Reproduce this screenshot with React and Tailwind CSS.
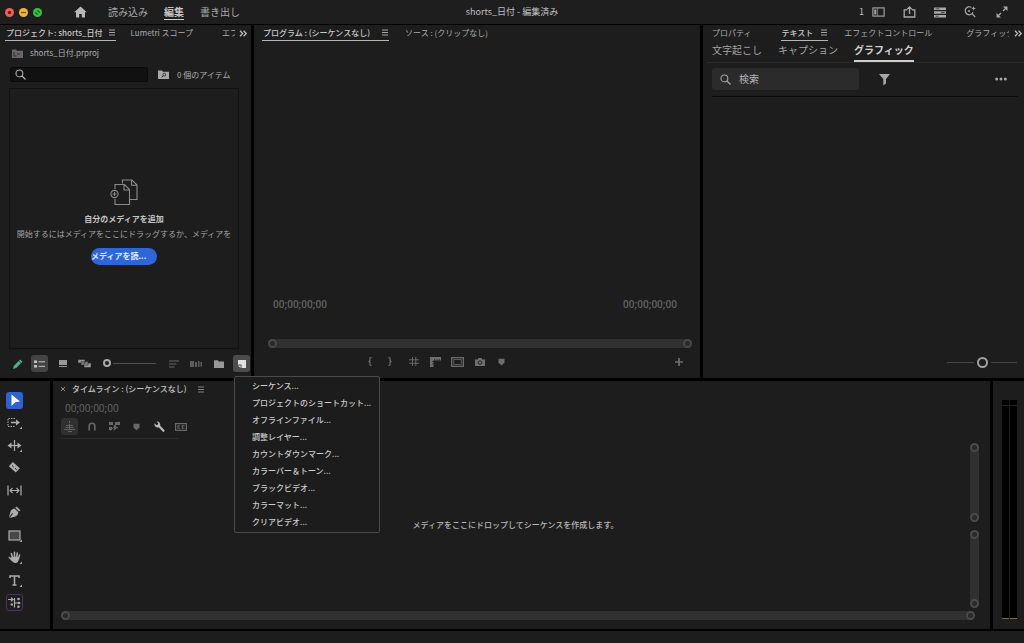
import React from "react";

const cx = "shrink-0 overflow-visible";

function Icon({ w, h, children, className = "" }) {
  return (
    <svg width={w} height={h} viewBox={`0 0 ${w} ${h}`} fill="none" stroke="currentColor" aria-hidden="true" className={`${cx} ${className}`}>
      {children}
    </svg>
  );
}

const Hamburger = () => (
  <Icon w={6} h={7}><path d="M0 1h6M0 3.5h6M0 6h6" strokeWidth="0.8" /></Icon>
);
const Chevrons = () => (
  <Icon w={8} h={7}><path d="M1 .8l2.6 2.7L1 6.2M4.6.8l2.6 2.7-2.6 2.7" strokeWidth="1.3" /></Icon>
);
const SearchIcon = ({ className }) => (
  <Icon w={11} h={11} className={className}><circle cx="4.4" cy="4.4" r="3.4" strokeWidth="1.1" /><path d="M7 7l3.5 3.5" strokeWidth="1.3" /></Icon>
);
const Marker = () => (
  <Icon w={7} h={8}><path d="M.5.8h6v3.8L3.5 7.5.5 4.6z" fill="currentColor" stroke="none" /></Icon>
);

function Tab({ active, children, className = "gap-2" }) {
  return (
    <button
      type="button"
      role="tab"
      aria-selected={!!active}
      className={`flex h-4 shrink-0 items-center whitespace-nowrap border-b px-px ${active ? "border-[#b5b5b5] font-medium text-[#c8c8c8]" : "border-transparent text-[#ababab]"} ${className}`}
    >
      {children}
      {active && <Hamburger />}
    </button>
  );
}

function Tool({ label, children, className = "" }) {
  return (
    <button type="button" aria-label={label} className={`flex size-[17px] shrink-0 items-center justify-center rounded-[3px] ${className}`}>
      {children}
    </button>
  );
}

function ZoomBar({ vertical, className = "" }) {
  return (
    <div className={`flex justify-between rounded-full bg-[#303030] ${vertical ? "w-[9px] flex-col" : "h-[9px]"} ${className}`}>
      <span className="size-[9px] rounded-full border-2 border-[#494949] bg-[#2a2a2a]" />
      <span className="size-[9px] rounded-full border-2 border-[#494949] bg-[#2a2a2a]" />
    </div>
  );
}

function Header() {
  return (
    <header className="grid grid-cols-[1fr_auto_1fr] items-center bg-[#1e1e1e] text-[10px] text-[#a9a9a9]">
      <div className="flex h-full items-center pl-[5px]">
        <div className="flex gap-[5px]">
          <button type="button" aria-label="閉じる" className="flex size-[9px] items-center justify-center rounded-full bg-[#ee5f57]">
            <Icon w={9} h={9} className="text-[#7c1512]"><circle cx="4.5" cy="4.5" r="1.7" fill="currentColor" stroke="none" /></Icon>
          </button>
          <button type="button" aria-label="最小化" className="flex size-[9px] items-center justify-center rounded-full bg-[#f0b43c]">
            <Icon w={9} h={9} className="text-[#8a5310]"><path d="M2 4.5h5" strokeWidth="1.3" /></Icon>
          </button>
          <button type="button" aria-label="拡大" className="flex size-[9px] items-center justify-center rounded-full bg-[#38c142]">
            <Icon w={9} h={9} className="text-[#0d6a17]"><path d="M2.4 5.6V3.8l2.8 2.8H3.4zM6.6 3.4v1.8L3.8 2.4h1.8z" fill="currentColor" strokeWidth="0.3" /></Icon>
          </button>
        </div>
        <button type="button" aria-label="ホーム" className="ml-8 text-[#b8b8b8]">
          <Icon w={13} h={12}><path d="M6.5.4L12.8 6.3H11v5.3H7.8V8H5.2v3.6H2V6.3H.2z" fill="currentColor" stroke="none" /></Icon>
        </button>
        <nav className="ml-[21px] flex items-center gap-4">
          <a href="#import">読み込み</a>
          <a href="#edit" className="border-b border-[#cfcfcf] font-bold leading-[15px] text-[#c4c4c4]">編集</a>
          <a href="#export">書き出し</a>
        </nav>
      </div>
      <h1 className="text-[9px] text-[#c0c0c0]">shorts_日付 - 編集済み</h1>
      <div className="flex items-center justify-end pr-4">
        <span className="mr-2 text-[9px] text-[#c0c0c0]">1</span>
        <button type="button" aria-label="ワークスペース" className="mr-[18px]">
          <Icon w={13} h={10}><rect x=".9" y=".9" width="11.2" height="8.2" strokeWidth="1.1" /><path d="M2.3 2.5h2v5h-2z" fill="currentColor" stroke="none" /><path d="M5.5 1v8" strokeWidth="0.6" /></Icon>
        </button>
        <button type="button" aria-label="クイック書き出し" className="mr-[18px]">
          <Icon w={13} h={12}><path d="M4 3.8H1.2v7.2h10.6V3.8H9M6.5 8V1.2M4 3.4l2.5-2.5L9 3.4" strokeWidth="1.3" /></Icon>
        </button>
        <button type="button" aria-label="進行状況" className="mr-[18px]">
          <Icon w={12} h={11}><path d="M0 1.8h12M0 5.5h12M0 9.2h12" strokeWidth="2.4" /><path d="M1.5 1.8h4M7 5.5h3.5M1.5 9.2h3" stroke="#1e1e1e" strokeWidth=".7" /></Icon>
        </button>
        <button type="button" aria-label="ヘルプ" className="mr-[19px]">
          <Icon w={13} h={12}><path d="M7.4 1.4A4 4 0 1 0 9 6.2M7.8 7.4l3.4 3.6" strokeWidth="1.2" /><circle cx="5" cy="5" r="1" fill="currentColor" stroke="none" /><path d="M9.6 0l.6 1.8 1.7.6-1.7.6-.6 1.8-.6-1.8-1.7-.6L9 1.8z" fill="currentColor" stroke="none" /></Icon>
        </button>
        <button type="button" aria-label="全画面">
          <Icon w={12} h={12}><path d="M7 0.5h4.5V5zM.5 7v4.5H5z" fill="currentColor" stroke="none" /><path d="M10.5 1.5L7 5M1.5 10.5L5 7" strokeWidth="1.3" /></Icon>
        </button>
      </div>
    </header>
  );
}

const newItems = [
  "シーケンス...",
  "プロジェクトのショートカット...",
  "オフラインファイル...",
  "調整レイヤー...",
  "カウントダウンマーク...",
  "カラーバー＆トーン...",
  "ブラックビデオ...",
  "カラーマット...",
  "クリアビデオ...",
];

function NewItemMenu() {
  return (
    <div role="menu" aria-label="新規項目" className="absolute left-px top-[21px] z-10 flex w-[146px] flex-col rounded-[2px] border border-[#4a4a4a] bg-[#1c1c1c] pb-[2px]">
      {newItems.map((item) => (
        <button key={item} type="button" role="menuitem" className="h-[17px] whitespace-nowrap pl-[17px] text-left font-medium text-[#cdcdcd]">
          {item}
        </button>
      ))}
    </div>
  );
}

function ProjectPanel() {
  return (
    <section className="flex min-w-0 flex-col bg-[#1d1d1d]">
      <div role="tablist" className="flex items-start pl-[5px]">
        <Tab active className="gap-[6px]">プロジェクト: shorts_日付</Tab>
        <Tab className="ml-[14px]">Lumetri スコープ</Tab>
        <Tab className="ml-[27px] w-[14px] overflow-hidden">エフェクト</Tab>
        <button type="button" aria-label="その他のパネル" className="ml-1 flex h-4 items-center text-[#bdbdbd]"><Chevrons /></button>
      </div>
      <div className="mt-1 flex h-4 items-center gap-[7px] pl-3 text-[#b0b0b0]">
        <Icon w={11} h={9} className="text-[#666]"><path d="M0 .5h4l1 1.2h6V9H0z" fill="currentColor" stroke="none" /><path d="M2 3v4h2.5M5 5h3" stroke="#2a2a2a" strokeWidth=".9" /></Icon>
        <span>shorts_日付.prproj</span>
      </div>
      <div className="mt-[6px] flex items-center pl-[10px]">
        <label className="flex h-[15px] w-[138px] items-center rounded-[2px] border border-[#0a0a0a] bg-[#111] pl-1 text-[#b0b0b0]">
          <SearchIcon />
          <input type="search" aria-label="プロジェクトを検索" className="ml-1 w-full min-w-0 bg-transparent outline-none" />
        </label>
        <button type="button" aria-label="検索ビン" className="ml-[10px] text-[#a8a8a8]">
          <Icon w={11} h={9}><path d="M0 .5h4l1 1.2h6V9H0z" fill="currentColor" stroke="none" /><circle cx="6.3" cy="4.7" r="1.4" stroke="#222" strokeWidth=".8" /><path d="M5.2 5.8L3.6 7.4" stroke="#222" strokeWidth=".9" /></Icon>
        </button>
        <span className="ml-2 whitespace-nowrap text-[#b0b0b0]">0 個のアイテム</span>
      </div>
      <div className="ml-[9px] mr-3 mt-[6px] flex grow flex-col items-center justify-center overflow-hidden border border-[#121212] pt-[6px]">
        <Icon w={28} h={26} className="text-[#8a8a8a]">
          <path d="M12.5 4.5V1h9.5l5 5v14.5h-7M21.5 1v5.3H27" strokeWidth="1.1" />
          <path d="M5 10V5.5h9.5l5 5v15H5V20M14 5.5v5.5h5.5" strokeWidth="1.1" />
          <circle cx="4.5" cy="15" r="3.6" strokeWidth="1.1" /><path d="M4.5 13v4M2.5 15h4" strokeWidth="1" />
        </Icon>
        <h2 className="mt-[6px] h-[15px] font-bold leading-[15px] text-[#c4c4c4]">自分のメディアを追加</h2>
        <p className="h-[15px] whitespace-nowrap leading-[15px] text-[#a2a2a2]">開始するにはメディアをここにドラッグするか、メディアを</p>
        <button type="button" className="mt-[7px] h-[17px] w-[66px] whitespace-nowrap rounded-full bg-[#2d66d8] text-left font-bold text-[#e4ebfa]">メディアを読...</button>
      </div>
      <div className="flex h-[29px] items-center pl-[9px] text-[#989898]">
        <Tool label="書き込み可能">
          <Icon w={10} h={10} className="text-[#4db184]"><path d="M0 10l.9-3.2L7.3.6l2.2 2.1L3.2 9z" fill="currentColor" stroke="none" /><path d="M6 1.9l2.2 2.2" stroke="#1d1d1d" strokeWidth=".6" /></Icon>
        </Tool>
        <Tool label="リスト表示" className="ml-[5px] bg-[#434343] text-[#c5c5c5]">
          <Icon w={11} h={8}><path d="M0 .5h3v2.5H0zM0 5h3v2.5H0z" fill="currentColor" stroke="none" /><path d="M4.5 1.8H11M4.5 6.3H11" strokeWidth="1" /></Icon>
        </Tool>
        <Tool label="アイコン表示" className="ml-[6px]">
          <Icon w={8} h={9}><path d="M0 1h8v5H0zM0 7h8v1H0z" fill="currentColor" stroke="none" /></Icon>
        </Tool>
        <Tool label="フリーフォーム表示" className="ml-[5px]">
          <Icon w={13} h={9}><path d="M0 .5h7v3.5H0zM3 2.5h7V6H3zM6 4h7v4.5H6z" fill="currentColor" stroke="#1d1d1d" strokeWidth=".5" /></Icon>
        </Tool>
        <input
          type="range" min="0" max="100" defaultValue="0" aria-label="アイコンのサイズ"
          className="ml-[10px] h-[9px] w-[53px] appearance-none bg-transparent [&::-webkit-slider-runnable-track]:h-[9px] [&::-webkit-slider-runnable-track]:bg-[linear-gradient(#505050,#505050)] [&::-webkit-slider-runnable-track]:bg-[length:100%_1px] [&::-webkit-slider-runnable-track]:bg-center [&::-webkit-slider-runnable-track]:bg-no-repeat [&::-webkit-slider-thumb]:size-[8px] [&::-webkit-slider-thumb]:appearance-none [&::-webkit-slider-thumb]:rounded-full [&::-webkit-slider-thumb]:border-2 [&::-webkit-slider-thumb]:border-[#a8a8a8] [&::-webkit-slider-thumb]:bg-[#1d1d1d] [&::-webkit-slider-thumb]:shadow-[0_0_0_2px_#1d1d1d]"
        />
        <Tool label="並べ替え" className="ml-[9px] text-[#666]">
          <Icon w={10} h={8}><path d="M0 1h10M0 4h7.5M0 7h5.5" strokeWidth="1" /></Icon>
        </Tool>
        <Tool label="シーケンスの自動化" className="ml-[5px] text-[#5d5d5d]">
          <Icon w={12} h={6}><path d="M0 0h4v6H0zM5 1h2v5H5zM8 0h1.5v6H8zM10.5 1H12v4.5h-1.5z" fill="currentColor" stroke="none" /></Icon>
        </Tool>
        <Tool label="新規ビン" className="ml-[6px]">
          <Icon w={10} h={8}><path d="M0 .3h3.8l1 1.2H10V8H0z" fill="currentColor" stroke="none" /></Icon>
        </Tool>
        <div className="relative ml-[6px]">
          <Tool label="新規項目" className="bg-[#4c4c4c] text-[#e0e0e0]">
            <Icon w={8} h={8}><path d="M0 0h8v8H3.5V4.5H0zM0 5.4L2.6 8V5.4z" fill="currentColor" stroke="none" /></Icon>
          </Tool>
          <NewItemMenu />
        </div>
      </div>
    </section>
  );
}

function ProgramPanel() {
  return (
    <section className="flex min-w-0 flex-col bg-[#1d1d1d]">
      <div role="tablist" className="flex items-start pl-2">
        <Tab active className="gap-3">プログラム : (シーケンスなし)</Tab>
        <Tab className="ml-[15px]">ソース : (クリップなし)</Tab>
      </div>
      <div className="grow" />
      <div className="flex justify-between pl-[19px] pr-[23px] font-['Open_Sans',sans-serif] text-[10px] font-semibold leading-4 text-[#636363]">
        <span>00;00;00;00</span>
        <span>00;00;00;00</span>
      </div>
      <ZoomBar className="ml-[14px] mr-2 mt-[27px]" />
      <div className="mb-2 mt-[5px] flex items-center justify-between pl-[107px] pr-[13px] text-[#6e6e6e]">
        <div className="flex gap-[5px]">
          <div className="mr-[2px] flex gap-[3px]">
            <Tool label="インをマーク"><Icon w={4} h={9}><path d="M3.5.5H3Q2 .5 2 1.5V3.5L1 4.5 2 5.5v2q0 1 1 1h.5" strokeWidth="1.2" /></Icon></Tool>
            <Tool label="アウトをマーク"><Icon w={4} h={9}><path d="M.5.5H1q1 0 1 1v2l1 1-1 1v2q0 1-1 1H.5" strokeWidth="1.2" /></Icon></Tool>
          </div>
          <Tool label="グリッド"><Icon w={10} h={9}><path d="M3.5 0v9M6.8 0v9M0 2.8h10M0 6.3h10" strokeWidth=".9" /></Icon></Tool>
          <Tool label="定規"><Icon w={11} h={10}><path d="M0 0h11v3.5H3.5V10H0z" fill="currentColor" stroke="none" /><path d="M4.5 4V2M7 4V2M9.3 4V2M4 4.5H2M4 6.8H2" stroke="#1d1d1d" strokeWidth=".7" /></Icon></Tool>
          <Tool label="セーフマージン"><Icon w={13} h={10}><rect x=".7" y=".7" width="11.6" height="8.6" strokeWidth="1.3" /><rect x="2.8" y="2.5" width="7.4" height="5" strokeWidth=".7" /></Icon></Tool>
          <Tool label="フレームを書き出し"><Icon w={10} h={8}><path d="M0 1.5h2.5L3.5 0h3l1 1.5H10V8H0z" fill="currentColor" stroke="none" /><circle cx="5" cy="4.6" r="1.7" stroke="#1d1d1d" strokeWidth=".9" /></Icon></Tool>
          <Tool label="マーカーを追加"><Marker /></Tool>
        </div>
        <Tool label="ボタンエディター"><Icon w={8} h={8}><path d="M4 0v8M0 4h8" strokeWidth="1.7" /></Icon></Tool>
      </div>
    </section>
  );
}

function TextPanel() {
  return (
    <section className="flex min-w-0 flex-col bg-[#1d1d1d]">
      <div role="tablist" className="flex items-start pl-2">
        <Tab>プロパティ</Tab>
        <Tab active className="ml-7 gap-2">テキスト</Tab>
        <Tab className="ml-[15px]">エフェクトコントロール</Tab>
        <Tab className="ml-[32px] w-[44px] overflow-hidden">グラフィックス</Tab>
        <button type="button" aria-label="その他のパネル" className="ml-[5px] flex h-4 items-center text-[#bdbdbd]"><Chevrons /></button>
      </div>
      <div role="tablist" className="ml-1 flex gap-4 border-b border-[#2b2b2b] pl-[5px] text-[10px] text-[#a2a2a2]">
        <button type="button" role="tab" aria-selected="false" className="h-[21px] pb-[3px]">文字起こし</button>
        <button type="button" role="tab" aria-selected="false" className="h-[21px] pb-[3px]">キャプション</button>
        <button type="button" role="tab" aria-selected="true" className="h-[21px] border-b-2 border-[#cfcfcf] pb-px font-bold text-[#cfcfcf]">グラフィック</button>
      </div>
      <div className="ml-[9px] mr-[6px] flex items-center border-b border-[#0b0b0b] pb-[6px] pt-[5px] text-[#a6a6a6]">
        <label className="flex h-[22px] w-[147px] items-center rounded-[3px] bg-[#2b2b2b] pl-2">
          <SearchIcon />
          <input type="search" aria-label="検索" placeholder="検索" className="ml-2 w-full min-w-0 bg-transparent text-[10px] outline-none placeholder:text-[#b4b4b4]" />
        </label>
        <button type="button" aria-label="フィルター" className="ml-5">
          <Icon w={11} h={11}><path d="M0 0h11L7 5v4.5L4.3 11.5V5z" fill="currentColor" stroke="none" /></Icon>
        </button>
        <button type="button" aria-label="その他" className="ml-auto mr-[11px]">
          <Icon w={12} h={4}><g fill="currentColor" stroke="none"><circle cx="1.7" cy="2" r="1.5" /><circle cx="6" cy="2" r="1.5" /><circle cx="10.3" cy="2" r="1.5" /></g></Icon>
        </button>
      </div>
      <div className="mt-auto flex justify-end pb-[9px] pr-[7px]">
        <input
          type="range" min="0" max="100" defaultValue="50" aria-label="サムネールのサイズ"
          className="h-[13px] w-[70px] appearance-none bg-transparent [&::-webkit-slider-runnable-track]:h-[13px] [&::-webkit-slider-runnable-track]:bg-[linear-gradient(#464646,#464646)] [&::-webkit-slider-runnable-track]:bg-[length:100%_1px] [&::-webkit-slider-runnable-track]:bg-center [&::-webkit-slider-runnable-track]:bg-no-repeat [&::-webkit-slider-thumb]:mt-px [&::-webkit-slider-thumb]:size-[11px] [&::-webkit-slider-thumb]:appearance-none [&::-webkit-slider-thumb]:rounded-full [&::-webkit-slider-thumb]:border-2 [&::-webkit-slider-thumb]:border-[#a0a0a0] [&::-webkit-slider-thumb]:bg-[#1d1d1d] [&::-webkit-slider-thumb]:shadow-[0_0_0_3px_#1d1d1d]"
        />
      </div>
    </section>
  );
}

const Corner = () => <path d="M16 12.5v2.5h-2.5z" fill="currentColor" stroke="none" />;

function ToolsPanel() {
  return (
    <aside aria-label="ツール" className="bg-[#1d1d1d] pl-[5px] pt-[11px] text-[#acacac]">
      <div className="flex h-[219px] w-[18px] flex-col items-center justify-between">
        <Tool label="選択ツール" className="bg-[#2c62d2] text-white">
          <Icon w={17} h={17}><path d="M5.5 2.5l8.5 7-4.5.6-4 4z" fill="currentColor" stroke="none" /></Icon>
        </Tool>
        <Tool label="トラックの前方選択ツール">
          <Icon w={17} h={17}><path d="M9 4.5H2v8h7" strokeWidth="1" strokeDasharray="1.5 1" /><path d="M5 8.5h6" strokeWidth="1.6" /><path d="M10 5.5l4 3-4 3z" fill="currentColor" stroke="none" /><Corner /></Icon>
        </Tool>
        <Tool label="リップルツール">
          <Icon w={17} h={17}><path d="M8.5 3v11" strokeWidth="1.2" /><path d="M5.5 5.5v6l-4-3zM11.5 5.5v6l4-3z" fill="currentColor" stroke="none" /><path d="M4 8.5h9" strokeWidth="1.3" /><Corner /></Icon>
        </Tool>
        <Tool label="レーザーツール">
          <Icon w={17} h={17}><path d="M6.8 3l7 6.3-4 4.2-7-6.3z" fill="currentColor" stroke="none" /><path d="M6 6.5l1.6 1.4M9 9.2l1.6 1.4" stroke="#1d1d1d" strokeWidth="1" /></Icon>
        </Tool>
        <Tool label="スリップツール">
          <Icon w={17} h={17}><path d="M2 3.5v10M15 3.5v10" strokeWidth="1.2" /><path d="M4 8.5h9M6.5 6L4 8.5 6.5 11M10.5 6L13 8.5 10.5 11" strokeWidth="1.1" /></Icon>
        </Tool>
        <Tool label="ペンツール">
          <Icon w={17} h={17}><path d="M10.5 2.5l3.8 3.7-1.3 1.2-3.7-3.6z" fill="currentColor" stroke="none" /><path d="M8.5 4.5L12.3 8.2Q12 12 8.5 12.7L3.5 14l3.5-4.2-.7-.7L2.9 13.4 4.3 8.2Q5 5 8.5 4.5z" fill="currentColor" stroke="none" /></Icon>
        </Tool>
        <Tool label="長方形ツール">
          <Icon w={17} h={17}><rect x="3" y="4" width="11" height="9" fill="#484848" strokeWidth="1.2" /><Corner /></Icon>
        </Tool>
        <Tool label="手のひらツール">
          <Icon w={17} h={17}><path d="M6.5 8.5L5.3 4.5M8.5 8V3.3M10.5 8.5l.8-4.5M12.5 9.5L13.5 6M5.8 11L3.3 8.4" strokeWidth="1.5" strokeLinecap="round" /><path d="M5 8.5l1-.8h6L13.2 9Q12.5 14 9.5 14T4.8 10z" fill="currentColor" stroke="none" /><Corner /></Icon>
        </Tool>
        <Tool label="横書き文字ツール">
          <Icon w={17} h={17}><path d="M4 6V4h9v2M8.5 4v9M6.5 13h4" strokeWidth="1.5" /><Corner /></Icon>
        </Tool>
        <Tool label="リミックスツール" className="border border-[#4a3561]">
          <Icon w={13} h={13}><path d="M0 3.5h5M3 1.8l2 1.7-2 1.7M6.5 2v9.5M6.5 7h4" strokeWidth="1.2" /><g fill="currentColor" stroke="none"><circle cx="10.5" cy="3" r="1.3" /><circle cx="11" cy="7" r="1.3" /><circle cx="10.5" cy="10.7" r="1.3" /><circle cx="3.8" cy="8.5" r="1.2" /></g></Icon>
        </Tool>
      </div>
    </aside>
  );
}

function TimelinePanel() {
  return (
    <section className="flex min-w-0 flex-col bg-[#1d1d1d] pl-2">
      <div className="flex h-4 items-center text-[#c4c4c4]">
        <button type="button" aria-label="パネルを閉じる"><Icon w={4} h={4} className="text-[#999]"><path d="M0 0l4 4M4 0L0 4" strokeWidth=".9" /></Icon></button>
        <h2 className="ml-[7px] font-medium">タイムライン : (シーケンスなし)</h2>
        <button type="button" aria-label="パネルメニュー" className="ml-[11px] text-[#999]"><Hamburger /></button>
      </div>
      <span className="mt-[3px] pl-1 font-['Open_Sans',sans-serif] text-[10px] leading-4 text-[#686868]">00;00;00;00</span>
      <div className="mt-[2px] flex w-[129px] justify-between text-[#686868]">
        <Tool label="ネストとして挿入" className="bg-[#303030]"><Icon w={11} h={11}><path d="M5.5 0v2M5.5 3v5M2 4.5h7M0 8.5h11M1.5 6.5h8M4 10.5h4" strokeWidth=".9" /></Icon></Tool>
        <Tool label="スナップ"><Icon w={8} h={9}><path d="M1.2 8.5V4a2.8 2.8 0 0 1 5.6 0v4.5" strokeWidth="1.6" /></Icon></Tool>
        <Tool label="リンクされた選択"><Icon w={11} h={11}><path d="M0 1h4v3H0zM6 1h5v3H6zM0 6h3v3H0z" fill="currentColor" stroke="none" /><path d="M4.5 3l5.5 4.2-3 .5-2.5 2.8z" fill="currentColor" stroke="#1d1d1d" strokeWidth=".5" /><path d="M1 10L10 .5" strokeWidth=".8" /></Icon></Tool>
        <Tool label="マーカーを追加"><Marker /></Tool>
        <Tool label="タイムライン表示設定" className="text-[#b8b8b8]"><Icon w={11} h={11}><path d="M4.5 4.5L9.5 9.8" strokeWidth="2.2" strokeLinecap="round" /><path d="M.5 2.3L2.3 4.1 3.9 3.8 4.2 2.2 2.5.5A3.2 3.2 0 0 1 6 5L4.8 6.2A3.2 3.2 0 0 1 .5 2.3z" fill="currentColor" stroke="none" /></Icon></Tool>
        <Tool label="キャプション"><Icon w={12} h={8}><rect x=".6" y=".6" width="10.8" height="6.8" strokeWidth="1.2" /><path d="M5.2 2.8H3v2.4h2.2M9.6 2.8H7.3v2.4h2.3" strokeWidth="1.1" /></Icon></Tool>
      </div>
      <hr className="mt-[3px] w-[118px] border-[#2c2c2c]" />
      <div className="mr-[11px] flex min-h-0 grow">
        <p className="flex grow items-center justify-center font-medium text-[#b8b8b8]">メディアをここにドロップしてシーケンスを作成します。</p>
        <div className="flex flex-col gap-2 pb-[3px] pt-1">
          <ZoomBar vertical className="grow" />
          <ZoomBar vertical className="grow" />
        </div>
      </div>
      <ZoomBar className="mb-[9px] mr-[15px]" />
    </section>
  );
}

function MeterPanel() {
  return (
    <aside aria-label="オーディオメーター" className="flex justify-center bg-[#1d1d1d] pb-[10px] pl-[2px] pt-[19px]">
      <div className="grid w-[15px] grid-cols-2 gap-px">
        <span className="border-b border-[#77704a] bg-black pt-[5px]"><span className="block h-px bg-[#222]" /></span>
        <span className="border-b border-[#77704a] bg-black pt-[5px]"><span className="block h-px bg-[#222]" /></span>
      </div>
    </aside>
  );
}

export default function App() {
  return (
    <div lang="ja" className="grid h-screen min-h-[520px] grid-rows-[24px_354fr_251fr_14px] bg-black font-['Noto_Sans_CJK_JP',sans-serif] text-[8px] leading-[14px]">
      <Header />
      <main className="grid min-h-0 grid-cols-[251px_minmax(0,1fr)_321px] gap-[3px] pt-px">
        <ProjectPanel />
        <ProgramPanel />
        <TextPanel />
      </main>
      <div className="grid min-h-0 grid-cols-[50px_minmax(0,1fr)_31px] gap-[3px] pt-[3px]">
        <ToolsPanel />
        <TimelinePanel />
        <MeterPanel />
      </div>
      <footer className="mt-[2px] bg-[#1d1d1d]" />
    </div>
  );
}
